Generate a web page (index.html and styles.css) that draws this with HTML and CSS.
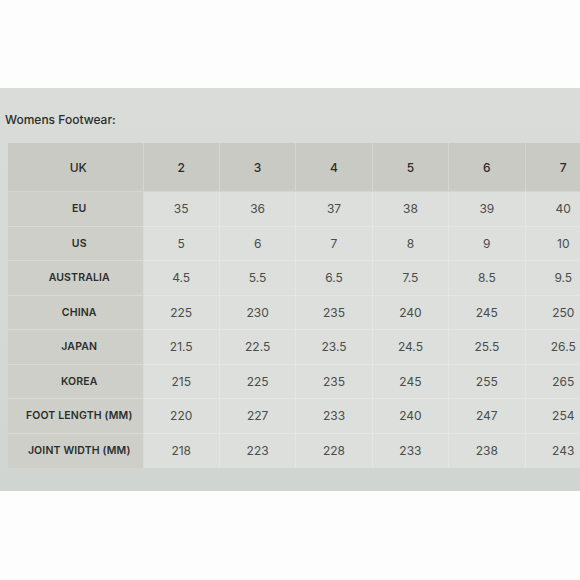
FILE: index.html
```html
<!DOCTYPE html>
<html lang="en">
<head>
<meta charset="utf-8">
<title>Womens Footwear</title>
<link rel="stylesheet" href="styles.css">
</head>
<body>
<div class="screen">
  <h2 class="title">Womens Footwear:</h2>
  <table class="chart">
    <colgroup><col class="c-label"><col><col><col><col><col><col></colgroup>
    <thead>
      <tr><th>UK</th><th>2</th><th>3</th><th>4</th><th>5</th><th>6</th><th>7</th></tr>
    </thead>
    <tbody>
      <tr><th>EU</th><td>35</td><td>36</td><td>37</td><td>38</td><td>39</td><td>40</td></tr>
      <tr><th>US</th><td>5</td><td>6</td><td>7</td><td>8</td><td>9</td><td>10</td></tr>
      <tr><th>AUSTRALIA</th><td>4.5</td><td>5.5</td><td>6.5</td><td>7.5</td><td>8.5</td><td>9.5</td></tr>
      <tr><th>CHINA</th><td>225</td><td>230</td><td>235</td><td>240</td><td>245</td><td>250</td></tr>
      <tr><th>JAPAN</th><td>21.5</td><td>22.5</td><td>23.5</td><td>24.5</td><td>25.5</td><td>26.5</td></tr>
      <tr><th>KOREA</th><td>215</td><td>225</td><td>235</td><td>245</td><td>255</td><td>265</td></tr>
      <tr><th>FOOT LENGTH (MM)</th><td>220</td><td>227</td><td>233</td><td>240</td><td>247</td><td>254</td></tr>
      <tr><th>JOINT WIDTH (MM)</th><td>218</td><td>223</td><td>228</td><td>233</td><td>238</td><td>243</td></tr>
    </tbody>
  </table>
</div>
</body>
</html>
```

FILE: styles.css
```css
html, body {
  margin: 0;
  padding: 0;
  background: #fdfdfd;
}
body {
  font-family: Inter, "Liberation Sans", sans-serif;
}
.screen {
  margin-top: 88px;
  height: 403px;
  background: linear-gradient(180deg, #d9dcd8 0%, #d5d9d5 60%, #d1d5d1 100%);
  overflow: hidden;
  padding-left: 8px;
  box-sizing: border-box;
}
.title {
  margin: 0 0 0 -3px;
  padding-top: 24px;
  height: 31px;
  font-size: 12px;
  font-weight: 500;
  color: #2b2c2b;
  line-height: 16px;
}
.chart {
  border-collapse: collapse;
  table-layout: fixed;
  width: 594px;
  font-size: 12px;
  margin-top: 0;
}
.c-label {
  width: 135px;
}
.chart th,
.chart td {
  text-align: center;
  padding: 0;
  border: 1.5px solid #e3e6e3;
}
.chart thead th {
  height: 48px;
  background: #c9cac3;
  font-weight: 500;
  font-size: 12px;
  color: #2a2a2a;
  border-top: none;
  border-color: #d4d6d0;
}
.chart thead th:first-child {
  border-left: none;
  padding-left: 6px;
}
.chart tbody th {
  background: #cdcfc8;
  font-weight: 600;
  font-size: 10.5px;
  color: #2c2d2c;
  letter-spacing: 0.15px;
  border-left: none;
  border-color: #d9dbd6;
  padding-left: 8px;
}
.chart tbody tr {
  height: 34.5px;
}
.chart tbody td {
  background: #dcdfdc;
  color: #4a4c4b;
  font-weight: 400;
}
.chart tbody tr:last-child th,
.chart tbody tr:last-child td {
  border-bottom: none;
}
```
